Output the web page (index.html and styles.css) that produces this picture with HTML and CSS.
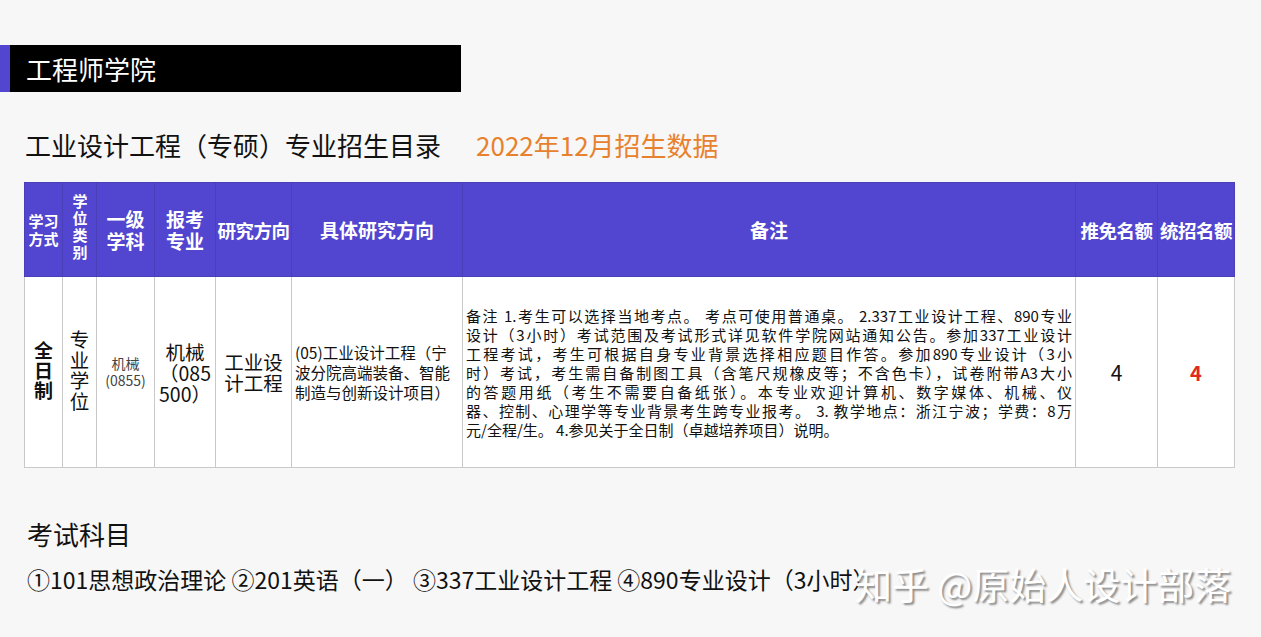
FILE: index.html
```html
<!DOCTYPE html>
<html lang="zh-CN">
<head>
    <meta charset="UTF-8">
    <meta name="viewport" content="width=device-width, initial-scale=1.0">
    <title>工业设计工程（专硕）专业招生目录</title>
    <link rel="stylesheet" href="styles.css">
</head>
<body>
    <div class="banner">工程师学院</div>

    <h1 class="title">工业设计工程（专硕）专业招生目录<span class="title-date">2022年12月招生数据</span></h1>

    <table class="catalog">
        <colgroup>
            <col style="width:38px">
            <col style="width:34px">
            <col style="width:58px">
            <col style="width:61px">
            <col style="width:76px">
            <col style="width:171px">
            <col style="width:613px">
            <col style="width:82px">
            <col style="width:77px">
        </colgroup>
        <thead>
            <tr>
                <th class="th-small">学习<br>方式</th>
                <th class="th-small"><span class="vertical">学位类别</span></th>
                <th>一级<br>学科</th>
                <th>报考<br>专业</th>
                <th class="th-tight">研究方向</th>
                <th>具体研究方向</th>
                <th>备注</th>
                <th class="th-tight">推免名额</th>
                <th class="th-tight">统招名额</th>
            </tr>
        </thead>
        <tbody>
            <tr>
                <td class="cell-mode"><span class="vertical">全日制</span></td>
                <td class="cell-big"><span class="vertical">专业学位</span></td>
                <td class="cell-small">机械<br>(0855)</td>
                <td class="cell-big">机械<br>（085<br>500）</td>
                <td class="cell-big">工业设<br>计工程</td>
                <td class="cell-text">(05)工业设计工程（宁<br>波分院高端装备、智能<br>制造与创新设计项目）</td>
                <td class="cell-note">
                    <span class="note-line">备注 1.考生可以选择当地考点。 考点可使用普通桌。 2.337工业设计工程、890专业</span>
                    <span class="note-line">设计（3小时）考试范围及考试形式详见软件学院网站通知公告。参加337工业设计</span>
                    <span class="note-line">工程考试，考生可根据自身专业背景选择相应题目作答。参加890专业设计（3小</span>
                    <span class="note-line">时）考试，考生需自备制图工具（含笔尺规橡皮等；不含色卡），试卷附带A3大小</span>
                    <span class="note-line">的答题用纸（考生不需要自备纸张）。本专业欢迎计算机、数字媒体、机械、仪</span>
                    <span class="note-line">器、控制、心理学等专业背景考生跨专业报考。 3. 教学地点：浙江宁波；学费：8万</span>
                    <span class="note-line last">元/全程/生。 4.参见关于全日制（卓越培养项目）说明。</span>
                </td>
                <td class="cell-num">4</td>
                <td class="cell-num red">4</td>
            </tr>
        </tbody>
    </table>

    <h2 class="subjects-title">考试科目</h2>
    <p class="subjects">①101思想政治理论 ②201英语（一） ③337工业设计工程 ④890专业设计（3小时）</p>

    <div class="watermark">知乎 @原始人设计部落</div>
</body>
</html>
```

FILE: styles.css
```css
:root {
    --purple: #5245cf;
    --orange: #e8812d;
    --line: #c9c9c9;
    --bg: #f7f7f7;
}

* {
    margin: 0;
    padding: 0;
    box-sizing: border-box;
}

body {
    background-color: var(--bg);
    color: #111;
    font-family: "Noto Sans CJK SC", "Noto Sans", sans-serif;
    position: relative;
    min-height: 637px;
    overflow: hidden;
}

.banner {
    width: 461px;
    height: 47px;
    margin-top: 45px;
    background-color: #000;
    border-left: 10px solid var(--purple);
    color: #fff;
    font-size: 26px;
    padding-left: 16px;
    display: flex;
    align-items: center;
}

.title {
    margin-top: 35px;
    padding-left: 25px;
    font-size: 26px;
    font-weight: normal;
    line-height: 36px;
    color: #111;
}

.title-date {
    color: var(--orange);
    margin-left: 35px;
}

.catalog {
    margin-top: 19px;
    margin-left: 24px;
    width: 1210px;
    table-layout: fixed;
    border-collapse: collapse;
}

.catalog th {
    height: 94px;
    background-color: var(--purple);
    color: #fff;
    font-size: 19px;
    font-weight: bold;
    line-height: 22px;
    border: 1px solid #4a3fb8;
    text-align: center;
    vertical-align: middle;
    padding: 0;
}

.catalog th.th-small {
    font-size: 15px;
    line-height: 18px;
}

.catalog th.th-tight {
    font-size: 18.5px;
    letter-spacing: -0.5px;
    white-space: nowrap;
    overflow: hidden;
}

.vertical {
    display: inline-block;
    writing-mode: vertical-rl;
    text-orientation: upright;
    letter-spacing: 1px;
}

.th-small .vertical {
    letter-spacing: 2px;
}

.catalog td {
    height: 191px;
    background-color: #fff;
    border: 1px solid var(--line);
    text-align: center;
    vertical-align: middle;
    padding: 0;
}

.cell-mode {
    font-size: 19px;
    font-weight: bold;
    line-height: 21px;
}

.cell-big {
    font-size: 19.5px;
    line-height: 21px;
}

.cell-small {
    font-size: 14px;
    line-height: 17px;
    color: #444;
}

.catalog td.cell-text {
    font-size: 15.5px;
    line-height: 20px;
    text-align: left;
    padding: 0 0 0 3px;
    white-space: nowrap;
    overflow: hidden;
}

.catalog td.cell-note {
    font-size: 15px;
    line-height: 19px;
    text-align: left;
    padding: 0 3px;
}

.note-line {
    display: block;
    text-align: justify;
    text-align-last: justify;
    white-space: nowrap;
}

.note-line.last {
    text-align-last: left;
}

.cell-num {
    font-size: 21px;
}

.cell-num.red {
    color: #e02a20;
    font-weight: bold;
    font-size: 20px;
}

.subjects-title {
    margin-top: 48px;
    padding-left: 27px;
    font-size: 26px;
    font-weight: normal;
    line-height: 36px;
}

.subjects {
    margin-top: 11px;
    padding-left: 27px;
    font-size: 23px;
    line-height: 32px;
    white-space: nowrap;
}

.watermark {
    position: absolute;
    left: 855px;
    top: 561px;
    font-size: 37px;
    line-height: 46px;
    color: #fff;
    text-shadow: 2px 2px 2px #8a8a8a;
    white-space: nowrap;
}
```
